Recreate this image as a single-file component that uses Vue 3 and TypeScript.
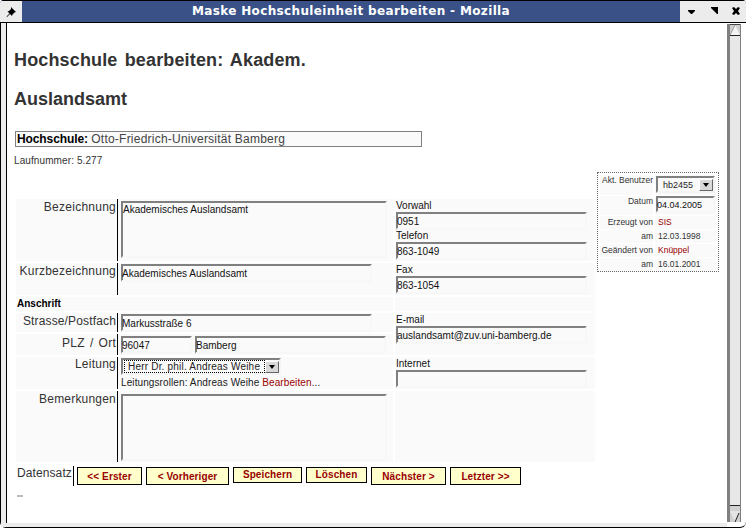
<script setup lang="ts">
const buttons = [
  { label: '<< Erster', w: 65, short: false },
  { label: '< Vorheriger', w: 83, short: false },
  { label: 'Speichern', w: 69, short: true },
  { label: 'Löschen', w: 61, short: true },
  { label: 'Nächster >', w: 75, short: false },
  { label: 'Letzter >>', w: 71, short: false },
]
const meta = [
  { k: 'Erzeugt von', v: 'SIS', red: true },
  { k: 'am', v: '12.03.1998', red: false },
  { k: 'Geändert von', v: 'Knüppel', red: true },
  { k: 'am', v: '16.01.2001', red: false },
]
</script>

<template>
  <div class="window">
    <header class="titlebar">
      <div class="tb-btn pin">
        <svg width="12" height="12" viewBox="0 0 12 12"><path d="M6 1l5 5-1.500 .5-2 2-.5 1.500-2-2-3 3-.5-.5 3-3-2-2 1.500-.5 2-2z" fill="#000"/></svg>
      </div>
      <div class="tb-title">Maske Hochschuleinheit bearbeiten - Mozilla</div>
      <div class="tb-btn right">
        <svg width="66" height="21" viewBox="0 0 66 21">
          <path d="M8 9h7v1l-3 3h-1l-3-3z" fill="#000"/>
          <path d="M31 6h7v7h-1l-6-6z" fill="#000"/>
          <path d="M52 7l2-1 2 2 2-2 2 1-2 3 2 3-2 1-2-2-2 2-2-1 2-3z" fill="#000"/>
        </svg>
      </div>
    </header>
    <div class="frame">
      <main class="page">
        <h1 class="h-top">Hochschule bearbeiten: Akadem.</h1>
        <h1 class="h-second">Auslandsamt</h1>
        <div class="school"><b>Hochschule:</b> <span class="school-name">Otto-Friedrich-Universität Bamberg</span></div>
        <div class="number">Laufnummer: 5.277</div>

        <aside class="side">
          <div class="s-k s-top">Akt. Benutzer</div>
          <div class="s-v">
            <div class="sel small"><span>hb2455</span><i class="arrow"></i></div>
          </div>
          <div class="s-k s-mid">Datum</div>
          <div class="s-v"><input class="inp date" value="04.04.2005" readonly /></div>
          <template v-for="m in meta" :key="m.k + m.v">
            <div class="s-k">{{ m.k }}</div>
            <div class="s-v txt" :class="{ red: m.red }">{{ m.v }}</div>
          </template>
        </aside>

        <section class="form">
          <div class="lab r1">Bezeichnung</div>
          <div class="val r1"><textarea class="inp ta1" readonly>Akademisches Auslandsamt</textarea></div>
          <div class="rgt r1">
            <div class="cap">Vorwahl</div>
            <input class="inp rin" value="0951" readonly />
            <div class="cap cap2">Telefon</div>
            <input class="inp rin" value="863-1049" readonly />
          </div>

          <div class="lab r2">Kurzbezeichnung</div>
          <div class="val r2"><input class="inp short" value="Akademisches Auslandsamt" readonly /></div>
          <div class="rgt r2">
            <div class="cap">Fax</div>
            <input class="inp rin" value="863-1054" readonly />
          </div>

          <div class="section-title r3">Anschrift</div>
          <div class="val blank r3"></div>
          <div class="rgt r3"></div>

          <div class="lab r4 street">Strasse/Postfach</div>
          <div class="val r4"><input class="inp short" value="Markusstraße 6" readonly /></div>
          <div class="rgt r45">
            <div class="cap">E-mail</div>
            <input class="inp rin" value="auslandsamt@zuv.uni-bamberg.de" readonly />
          </div>

          <div class="lab r5 plz-lab">PLZ / Ort</div>
          <div class="val r5 plz">
            <input class="inp zip" value="96047" readonly />
            <input class="inp city" value="Bamberg" readonly />
          </div>

          <div class="lab r6 tight">Leitung</div>
          <div class="val r6">
            <div class="sel big"><span class="focus">Herr Dr. phil. Andreas Weihe</span><i class="arrow"></i></div>
            <div class="roles">Leitungsrollen: Andreas Weihe <span class="red">Bearbeiten</span>...</div>
          </div>
          <div class="rgt r6">
            <div class="cap">Internet</div>
            <input class="inp rin" value="" readonly />
          </div>

          <div class="lab r7 remarks">Bemerkungen</div>
          <div class="val r7"><textarea class="inp ta2" readonly></textarea></div>
          <div class="rgt r7"></div>
        </section>

        <div class="actions">
          <div class="ds">Datensatz</div>
          <button
            v-for="b in buttons"
            :key="b.label"
            class="btn"
            :class="{ short: b.short }"
            :style="{ width: b.w + 'px' }"
          >{{ b.label }}</button>
        </div>
        <div class="dash"></div>
      </main>
      <div class="scroll">
        <div class="arrow-cell up"><svg width="10" height="10" viewBox="0 0 10 10"><path d="M5 0L10 10H0z" fill="#f4f4f4"/><path d="M5 0L0 10" stroke="#999" fill="none"/></svg></div>
        <div class="track"></div>
        <div class="arrow-cell down"><svg width="10" height="12" viewBox="0 0 10 12"><path d="M0 1H10L5 12z" fill="#e4e4e4"/><path d="M9 3L5 12" stroke="#222" fill="none"/></svg></div>
      </div>
    </div>
  </div>
</template>

<style>
html, body { margin: 0; padding: 0; background: #fff; }
</style>

<style scoped>
.window { width: 746px; height: 528px; display: flex; flex-direction: column; overflow: hidden; font-family: "Liberation Sans", Arial, sans-serif; color: #333; background: #fff; border-radius: 4px 4px 0 0; }
.titlebar { display: flex; background: #3a5188; border-bottom: 1px solid #000; flex: none; box-sizing: border-box; height: 23px; border-top: 1px solid #000; }
.tb-btn { background: #ececec; display: flex; align-items: center; justify-content: center; }
.pin { width: 22px; }
.right { width: 66px; }
.tb-title { flex: 1; color: #fff; font: bold 12px "DejaVu Sans", sans-serif; text-align: center; line-height: 20px; letter-spacing: .35px; }
.frame { flex: 1; display: flex; min-height: 0; border-left: 1px solid #000; border-bottom: 1px solid #000; box-sizing: border-box; position: relative; border-radius: 0 0 6px 6px; }
.page { width: 726px; box-sizing: border-box; border-left: 5px solid #ececec; padding: 0 0 0 9px; position: relative; box-shadow: inset 1px 0 0 #000; border-bottom: 4px solid #ececec; }
.h-top, .h-second { font-size: 18px; font-weight: bold; color: #333; margin: 0 0 0 -1px; line-height: 21px; }
.h-top { padding-top: 27px; word-spacing: 2px; letter-spacing: .15px; }
.h-second { padding-top: 18px; }
.school { margin-top: 21px; width: 407px; height: 16px; box-sizing: border-box; border: 1px solid #808080; background: #fafafa; font-size: 12px; line-height: 14px; padding-left: 1px; color: #444; }
.school b { color: #000; letter-spacing: -.1px; }
.school-name { letter-spacing: .23px; }
.number { font-size: 10px; margin: 7px 0 0 -1px; line-height: 13px; color: #333; letter-spacing: .1px; }

.side { position: absolute; left: 591px; top: 149px; width: 122px; height: 100px; box-sizing: border-box; border: 1px dotted #666; padding: 2px; display: grid; grid-template-columns: 53px 61px; grid-template-rows: 20px 19px repeat(4, 13px); gap: 1px 2px; font-size: 8.500px; background: #fff; }
.s-k { text-align: right; background: #fafafa; line-height: 13px; white-space: nowrap; color: #333; }
.s-v { background: #fafafa; }
.s-top { line-height: 11px; }
.s-mid { line-height: 10px; }
.txt { line-height: 13px; padding-left: 3px; }
.red { color: #990000; }

.inp { display: block; box-sizing: border-box; font: 10px "Liberation Sans", Arial, sans-serif; color: #111; background: #fafafa; border-style: solid; border-width: 2px 2px 2px 1px; border-color: #808080 #f7f7f7 #f7f7f7 #808080; box-shadow: inset 1px 0 0 #808080; padding: 1px 0 0 0; margin: 0; outline: none; resize: none; border-radius: 0; overflow: hidden; }
.ta1, .ta2 { border-left-width: 2px; box-shadow: none; }
.date { width: 59px; height: 17px; font-size: 9px; margin-left: 1px; }

.sel { display: flex; align-items: center; box-sizing: border-box; border-style: solid; border-width: 2px; border-color: #808080 #f4f4f4 #f4f4f4 #808080; background: #fafafa; font-size: 10px; color: #222; }
.small { width: 59px; height: 17px; margin: 1px 0 0 1px; padding-left: 5px; justify-content: space-between; font-size: 9px; }
.big { width: 160px; height: 17px; padding-left: 1px; }
.focus { outline: 1px dotted #000; outline-offset: -1px; flex: 1; padding-left: 4px; line-height: 13px; color: #222; white-space: nowrap; letter-spacing: .2px; }
.arrow { width: 14px; height: 12px; background: #d8d8d8; border: 1px solid; border-color: #fff #666 #666 #fff; box-sizing: border-box; position: relative; flex: none; }
.arrow::after { content: ""; position: absolute; left: 3px; top: 3px; border: 3px solid transparent; border-top: 4px solid #000; border-bottom: 0; }

.form { display: grid; width: 579px; margin-left: 1px; margin-top: 32px; grid-template-columns: 101px 278px 200px; grid-template-rows: 62px 32px 14px 19px 21px 32px 71px; row-gap: 2px; font-size: 10px; }
.r1 { grid-row: 1; } .r2 { grid-row: 2; } .r3 { grid-row: 3; } .r4 { grid-row: 4; } .r5 { grid-row: 5; } .r6 { grid-row: 6; } .r7 { grid-row: 7; }
.r45 { grid-row: 4 / span 2; }
.lab { grid-column: 1; background: #fafafa; text-align: right; font-size: 12px; line-height: 16px; letter-spacing: .25px; color: #333; white-space: nowrap; padding-right: 1px; }
.street { letter-spacing: .15px; }
.remarks { letter-spacing: .2px; }
.plz-lab { word-spacing: 1.500px; line-height: 18px; }
.tight { line-height: 14px; }
.section-title { grid-column: 1; font-weight: bold; font-size: 10px; color: #000; line-height: 14px; background: #fafafa; padding-left: 1px; }
.val { grid-column: 2; background: #fafafa; border-left: 1px solid #000; padding: 2px 0 0 3px; box-sizing: border-box; margin-right: 2px; }
.val.blank { border-left: 0; padding: 0; }
.val.r2, .val.r4, .val.r6 { padding-top: 1px; }
.rgt { grid-column: 3; background: #fafafa; box-sizing: border-box; padding-left: 1px; }
.cap { font-size: 10px; line-height: 13px; color: #111; }
.cap2 { line-height: 12px; }
.rin { width: 191px; height: 18px; }
.ta1 { width: 266px; height: 57px; }
.ta2 { width: 266px; height: 67px; margin-top: 1px; }
.short { width: 251px; height: 18px; }
.plz { display: flex; gap: 3px; }
.zip { width: 71px; height: 18px; }
.city { width: 191px; height: 18px; }
.roles { font-size: 10px; line-height: 12px; margin-top: 2px; color: #222; white-space: nowrap; letter-spacing: .1px; }

.actions { display: flex; align-items: flex-start; margin-top: 4px; margin-left: 2px; }
.ds { font-size: 12px; color: #333; width: 57px; height: 20px; line-height: 15px; border-right: 1px solid #000; margin-right: 3px; letter-spacing: .1px; box-sizing: border-box; }
.btn { height: 18px; box-sizing: border-box; border: 1px solid #000; outline: none; background: #ffffcc; color: #990000; font: bold 10px "Liberation Sans", Arial, sans-serif; letter-spacing: .1px; padding: 0; margin: 1px 4px 0 0; }
.btn.short { height: 16px; padding-bottom: 2px; }
.dash { width: 6px; height: 2px; background: #bbb; margin: 9px 0 0 2px; }

.scroll { width: 14px; height: 498px; margin-top: 1px; display: flex; flex-direction: column; border-style: solid; border-color: #808080; border-width: 0 1px 0 3px; box-sizing: border-box; background: #e8e8e8; flex: none; }
.arrow-cell { display: flex; justify-content: center; align-items: center; background: #d0d0d0; flex: none; }
.up { height: 12px; border-bottom: 1px solid #222; border-top: 1px solid #444; box-sizing: border-box; }
.down { height: 17px; border-top: 1px solid #222; box-sizing: border-box; align-items: flex-end; }
.track { flex: 1; background: #e8e8e8; }
</style>
